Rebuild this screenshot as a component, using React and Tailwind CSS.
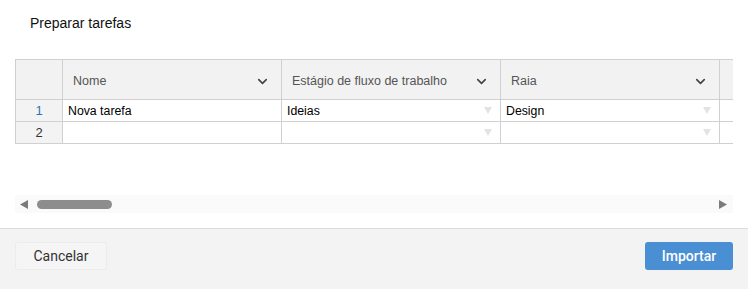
import { ChevronDown } from "lucide-react";

const columns = ["Nome", "Estágio de fluxo de trabalho", "Raia", ""];

const rows = [
  { num: "1", cells: ["Nova tarefa", "Ideias", "Design", ""] },
  { num: "2", cells: ["", "", "", ""] },
];

function CellCaret() {
  return (
    <svg width="8" height="7" viewBox="0 0 8 7" className="shrink-0">
      <path d="M0 0 L8 0 L4 7 Z" fill="#e3e3e3" />
    </svg>
  );
}

export default function App() {
  return (
    <div
      className="w-[748px] h-[289px] bg-white flex flex-col overflow-hidden"
      style={{ fontFamily: '"Liberation Sans", Arial, sans-serif' }}
    >
      <div className="h-[59px] pl-[30px] pt-[13px] text-[14px] text-[#111]">Preparar tarefas</div>

      <div className="mx-[15px] w-[718px] overflow-hidden">
        <div className="grid grid-cols-[47px_219px_219px_219px_219px] w-max border-l border-t border-[#d0d0d0]">
          <div className="h-[40px] bg-[#f2f2f2] border-r border-b border-[#d0d0d0]" />
          {columns.map((c, i) => (
            <div
              key={i}
              className="h-[40px] bg-[#f2f2f2] border-r border-b border-[#d0d0d0] flex items-center pl-[10px] pr-[11px] pt-[3px] text-[12.5px] text-[#555]"
            >
              {c && <span className="flex-1">{c}</span>}
              {c && <ChevronDown size={15} strokeWidth={2.6} className="text-[#444]" />}
            </div>
          ))}
          {rows.map((r) => (
            <>
              <div
                key={r.num + "n"}
                className={`h-[22px] bg-[#f3f3f3] border-r border-b border-[#d0d0d0] flex items-center justify-center text-[13px] ${
                  r.num === "1" ? "text-[#2f72b8]" : "text-[#333]"
                }`}
              >
                {r.num}
              </div>
              {r.cells.map((t, j) => (
                <div
                  key={r.num + j}
                  className="h-[22px] border-r border-b border-[#d0d0d0] flex items-center pl-[5px] pr-[8px] text-[12.3px] text-black"
                >
                  <span className="flex-1 pt-[1px]">{t}</span>
                  {(j === 1 || j === 2) && <CellCaret />}
                </div>
              ))}
            </>
          ))}
        </div>
      </div>

      <div className="mt-[51px] mx-[15px] w-[718px] h-[18px] bg-[#fafafa] flex items-center">
        <svg width="8" height="9" viewBox="0 0 8 9" className="ml-[5px]">
          <path d="M8 0 L8 9 L0 4.5 Z" fill="#7b7b7b" />
        </svg>
        <div className="ml-[9px] w-[75px] h-[9px] rounded-full bg-[#8d8d8d]" />
        <div className="flex-1" />
        <svg width="8" height="9" viewBox="0 0 8 9" className="mr-[6px]">
          <path d="M0 0 L0 9 L8 4.5 Z" fill="#7b7b7b" />
        </svg>
      </div>

      <div
        className="mt-[15px] flex-1 bg-[#f3f3f3] border-t border-[#dcdcdc] flex items-start justify-between px-[15px] pt-[13px]"
        style={{ fontFamily: "Roboto, Arial, sans-serif" }}
      >
        <button className="w-[92px] h-[28px] bg-[#f5f5f5] border border-[#ececec] rounded-[2px] text-[14px] text-[#333]">
          Cancelar
        </button>
        <button className="w-[88px] h-[28px] bg-[#4a8ed4] rounded-[3px] text-[14px] font-medium text-white">
          Importar
        </button>
      </div>
    </div>
  );
}
